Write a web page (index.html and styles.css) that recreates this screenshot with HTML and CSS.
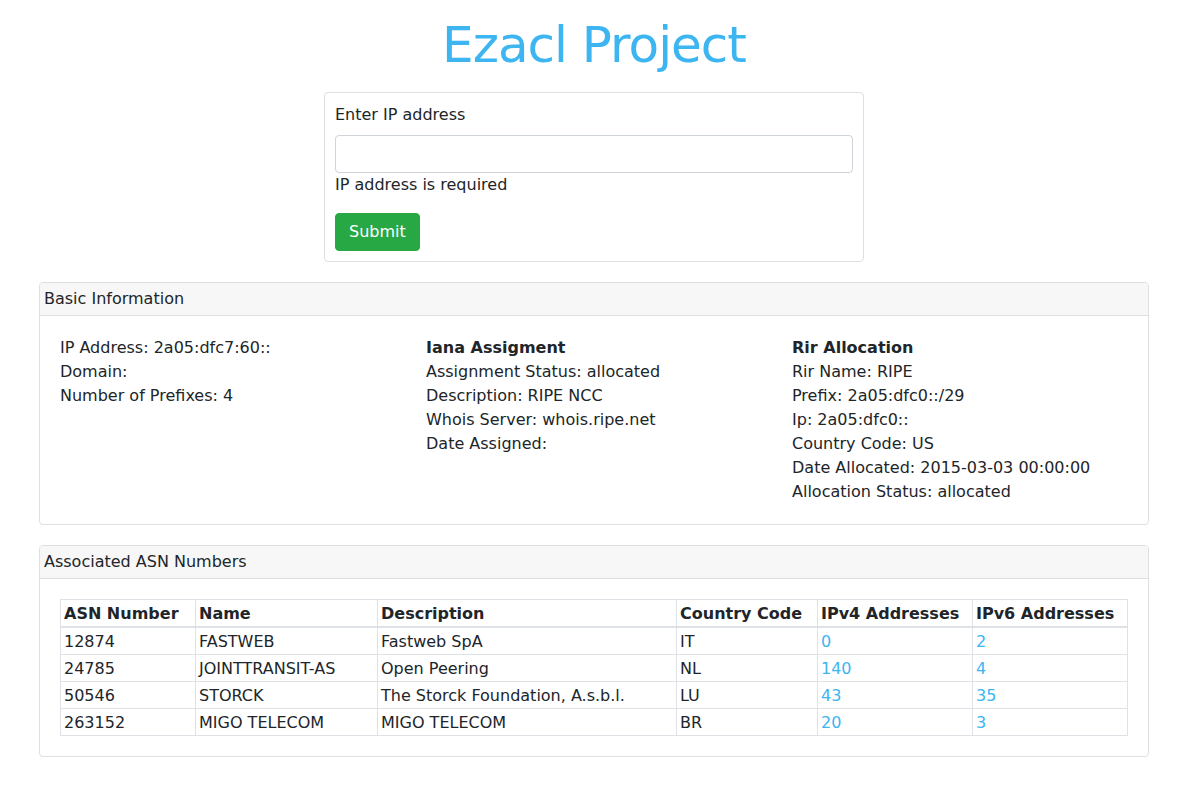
FILE: index.html
```html
<!DOCTYPE html>
<html lang="en">
<head>
<meta charset="utf-8">
<title>Ezacl Project</title>
<link rel="stylesheet" href="styles.css">
</head>
<body>
<div class="page">
  <h1 class="title">Ezacl Project</h1>

  <form class="card form-card">
    <label class="label" for="ip">Enter IP address</label>
    <input id="ip" class="input" type="text">
    <div class="error">IP address is required</div>
    <button class="btn" type="button">Submit</button>
  </form>

  <section class="card panel">
    <div class="panel-head">Basic Information</div>
    <div class="panel-body info-grid">
      <div class="info-col">
        <div>IP Address: 2a05:dfc7:60::</div>
        <div>Domain:</div>
        <div>Number of Prefixes: 4</div>
      </div>
      <div class="info-col">
        <div class="strong">Iana Assigment</div>
        <div>Assignment Status: allocated</div>
        <div>Description: RIPE NCC</div>
        <div>Whois Server: whois.ripe.net</div>
        <div>Date Assigned:</div>
      </div>
      <div class="info-col">
        <div class="strong">Rir Allocation</div>
        <div>Rir Name: RIPE</div>
        <div>Prefix: 2a05:dfc0::/29</div>
        <div>Ip: 2a05:dfc0::</div>
        <div>Country Code: US</div>
        <div>Date Allocated: 2015-03-03 00:00:00</div>
        <div>Allocation Status: allocated</div>
      </div>
    </div>
  </section>

  <section class="card panel">
    <div class="panel-head">Associated ASN Numbers</div>
    <div class="panel-body">
      <table class="asn-table">
        <colgroup>
          <col class="c-asn"><col class="c-name"><col class="c-desc"><col class="c-cc"><col class="c-v4"><col class="c-v6">
        </colgroup>
        <thead>
          <tr><th>ASN Number</th><th>Name</th><th>Description</th><th>Country Code</th><th>IPv4 Addresses</th><th>IPv6 Addresses</th></tr>
        </thead>
        <tbody>
          <tr><td>12874</td><td>FASTWEB</td><td>Fastweb SpA</td><td>IT</td><td><a href="#">0</a></td><td><a href="#">2</a></td></tr>
          <tr><td>24785</td><td>JOINTTRANSIT-AS</td><td>Open Peering</td><td>NL</td><td><a href="#">140</a></td><td><a href="#">4</a></td></tr>
          <tr><td>50546</td><td>STORCK</td><td>The Storck Foundation, A.s.b.l.</td><td>LU</td><td><a href="#">43</a></td><td><a href="#">35</a></td></tr>
          <tr><td>263152</td><td>MIGO TELECOM</td><td>MIGO TELECOM</td><td>BR</td><td><a href="#">20</a></td><td><a href="#">3</a></td></tr>
        </tbody>
      </table>
    </div>
  </section>
</div>
</body>
</html>
```

FILE: styles.css
```css
* { box-sizing: border-box; }

html, body {
  margin: 0;
  padding: 0;
  background: #ffffff;
}

body {
  font-family: "DejaVu Sans", "Noto Sans", sans-serif;
  font-size: 16px;
  line-height: 24px;
  color: #212529;
}

.page {
  width: 1110px;
  margin: 0 0 0 calc(50% - 554px);
  padding-top: 15px;
  display: flex;
  flex-direction: column;
  align-items: center;
}

.title {
  margin: 0 0 17px;
  font-size: 50px;
  line-height: 60px;
  font-weight: 400;
  letter-spacing: -1px;
  color: #3db5f1;
  text-align: center;
}

.card {
  border: 1px solid #dfdfdf;
  border-radius: 4px;
  background: #fff;
}

.form-card {
  width: 540px;
  padding: 10px;
  display: flex;
  flex-direction: column;
  align-items: flex-start;
  margin: 0;
}

.label {
  display: block;
  margin-bottom: 8px;
}

.input {
  width: 100%;
  height: 38px;
  border: 1px solid #ced4da;
  border-radius: 4px;
  padding: 6px 12px;
  font: inherit;
  color: #495057;
  background: #fff;
}

.error {
  margin-bottom: 16px;
}

.btn {
  height: 38px;
  padding: 0 13px;
  border: 1px solid #28a745;
  border-radius: 4px;
  background: #28a745;
  color: #fff;
  font: inherit;
  cursor: pointer;
}

.panel {
  width: 1110px;
  margin-top: 20px;
  overflow: hidden;
}

.panel-head {
  padding: 4px;
  background: #f7f7f7;
  border-bottom: 1px solid #dfdfdf;
}

.panel-body {
  padding: 20px;
}

.info-grid {
  display: grid;
  grid-template-columns: repeat(3, 1fr);
  column-gap: 30px;
}

.strong {
  font-weight: 600;
}

.asn-table {
  width: 100%;
  border-collapse: collapse;
  table-layout: fixed;
}

.c-asn { width: 135px; }
.c-name { width: 182px; }
.c-desc { width: 299px; }
.c-cc { width: 141px; }
.c-v4 { width: 155px; }
.c-v6 { width: 155px; }

.asn-table th,
.asn-table td {
  border: 1px solid #dee2e6;
  padding: 2px 3px 0;
  text-align: left;
  white-space: nowrap;
  overflow: hidden;
}

.asn-table th {
  font-weight: 600;
  border-bottom: 2px solid #dee2e6;
}

.asn-table a {
  color: #3db5f1;
  text-decoration: none;
}
```
